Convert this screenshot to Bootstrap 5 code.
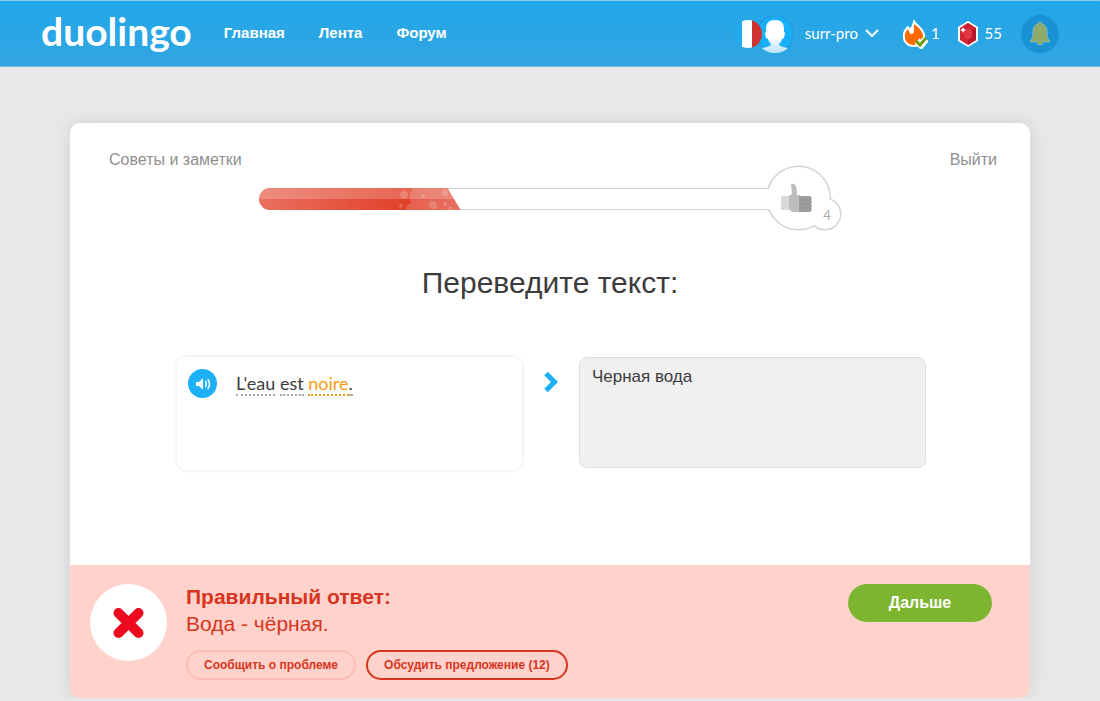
<!DOCTYPE html>
<html lang="ru">
<head>
<meta charset="utf-8">
<meta name="viewport" content="width=device-width, initial-scale=1">
<title>Duolingo</title>
<link href="https://cdn.jsdelivr.net/npm/bootstrap@5.3.0/dist/css/bootstrap.min.css" rel="stylesheet">
<style>
  body { font-family: "Liberation Sans", Arial, sans-serif; font-size: 16px; background: #e8e8e8; color: #3c3c3c; }
  a { text-decoration: none; }
  .latin { font-family: Lato, "Open Sans", sans-serif; }
  .topbar { height: 67px; background: linear-gradient(#21a7ea, #32a5e0); border-top: 1px solid #8acbea; border-bottom: 1px solid #6fbbe2; }
  .topbar-inner { max-width: 1018px; }
  .topbar a, .topbar button { color: #fff; }
  .wordmark { font: 700 39px/44px Lato, sans-serif; margin-right: 32px; padding-bottom: 6px; }
  .main-links { gap: 34px; font-size: 15px; font-weight: 700; }
  .user-menu { font-size: 15px; gap: 7px; margin-right: 23px; }
  .avatar-pair { margin-right: 3px; }
  .counter { font-size: 15px; gap: 3px; }
  .counter-gems { gap: 6px; margin-left: 17px; }
  .bell { width: 38px; height: 38px; background: #1a91d2; margin-left: 19px; }
  .lesson { max-width: 960px; margin-top: 56px; border-radius: 10px; background: #fff; box-shadow: 0 0 18px rgba(0,0,0,.1); overflow: hidden; }
  .lesson-links { padding: 26px 33px 0 39px; line-height: 22px; }
  .lesson-links a { color: #8f8f8f; }
  .meter { max-width: 583px; height: 66px; margin-top: -6px; }
  .meter-track { height: 22px; margin-top: 2px; border: solid #d0d0d0; border-width: 1px 0; border-radius: 11px 0 0 11px; }
  .meter-fill { height: 22px; margin: -1px 0; border-radius: 11px 0 0 11px; clip-path: polygon(0 0, calc(100% - 13px) 0, 100% 100%, 0 100%);
    background: linear-gradient(rgba(255,255,255,.2) 50%, transparent 50%), linear-gradient(90deg, #ea705f, #e03f28 75%, #e2503c); }
  .prompt { font-size: 30px; line-height: 36px; margin: 34px 0 55px; }
  .exercise { padding: 0 104px 94px 106px; }
  .source { min-height: 115px; border: 1px solid #f3f3f3; border-radius: 10px; box-shadow: 0 0 3px rgba(0,0,0,.08); padding: 12px 11px; gap: 19px; }
  .speaker { width: 29px; height: 29px; background: #1cb0f6; }
  .sentence { font-size: 18px; line-height: 22px; padding-top: 3px; }
  .word { border-bottom: 2px dotted #aaa; }
  .word-new { color: #f79a0e; border-color: #f79a0e; }
  .arrow { width: 56px; padding-top: 15px; }
  .answer { height: 111px; margin-top: 1px; background: #f0f0f0; border: 1px solid #dedede; border-radius: 8px; padding: 8px 12px; color: #3c3c3c; font-size: 17px; line-height: 22px; resize: none; }
  .answer:focus { background: #f0f0f0; }
  .verdict { background: #ffd3cc; color: #d7351d; padding: 19px 38px 18px 20px; min-height: 133px; }
  .cross { width: 77px; height: 77px; margin-right: 19px; }
  .verdict-title { font-size: 21px; line-height: 26px; }
  .verdict-text { font-size: 21px; line-height: 28px; margin-bottom: 12px; }
  .verdict-actions { gap: 10px; }
  .pill { height: 30px; font-size: 12px; font-weight: 700; line-height: 16px; border: 2px solid #fbbdb4; border-radius: 15px; padding: 0 16px; color: #d7351d; }
  .pill-strong { border-color: #d7351d; }
  .next { width: 144px; height: 38px; border-radius: 19px; background: #7eb530; color: #fff; font-weight: 700; font-size: 16px; }
</style>
</head>
<body>
<header class="topbar">
  <div class="topbar-inner container-fluid px-0 h-100 d-flex align-items-center">
    <a class="wordmark" href="#">duolingo</a>
    <nav class="main-links d-flex" aria-label="Разделы">
      <a href="#">Главная</a><a href="#">Лента</a><a href="#">Форум</a>
    </nav>
    <button class="user-menu latin btn p-0 border-0 d-flex align-items-center ms-auto" type="button">
      <svg class="avatar-pair" width="61" height="40" viewBox="0 0 61 40" aria-hidden="true">
        <defs>
          <clipPath id="flagClip"><circle cx="14" cy="20" r="14"/></clipPath>
          <linearGradient id="face" x1="0" y1="0" x2="0" y2="1"><stop offset=".5" stop-color="#fff"/><stop offset="1" stop-color="#b9e2f8"/></linearGradient>
        </defs>
        <circle cx="41" cy="20" r="19" fill="#22a0e4"/><circle cx="41" cy="20" r="17" fill="#17b0f8"/>
        <g clip-path="url(#flagClip)"><path fill="#22a9ef" d="M0 6h9v28H0z"/><path fill="#fff" d="M8 6h10v28H8z"/><path fill="#d0322f" d="M18 6h12v28H18z"/></g>
        <path fill="url(#face)" d="M41 6c6 0 9 3 9 9v3l1 1-1 5-2 1c-1 3-2 4-3 5 0 3 6 3 9 4-4 4-8 5-13 5s-9-1-13-5c3-1 9-1 9-4-1-1-2-2-3-5l-2-1-1-5 1-1v-3c0-6 3-9 9-9z"/>
      </svg>
      surr-pro
      <svg width="14" height="9" viewBox="0 0 14 9" fill="none" stroke="#fff" stroke-width="2" aria-hidden="true"><path d="M1 1l6 6 6-6"/></svg>
    </button>
    <a class="counter latin d-flex align-items-center" href="#">
      <svg width="26" height="30" viewBox="0 0 26 30" aria-hidden="true">
        <path d="M12 2c1 4 9 7 10 14 1 7-4 11-10 11S1 23 2 16c0-3 2-6 4-8l1 3c3-2 5-5 5-9z" fill="#ff6a00" stroke="#fff" stroke-width="2" stroke-linejoin="round"/>
        <path d="M7 10q3 1 5-3v5c0 4-5 4-5 0z" fill="#fff"/>
        <path d="M15 22l4 4 5-6" fill="none" stroke="#fff" stroke-width="7"/><path d="M14 22l4 4 6-7" fill="none" stroke="#6f9d13" stroke-width="3"/>
      </svg>1</a>
    <a class="counter counter-gems latin d-flex align-items-center" href="#">
      <svg width="22" height="28" viewBox="0 0 22 28" aria-hidden="true">
        <path d="M11 1l10 6v14l-10 6-10-6V7z" fill="#fff"/><path d="M11 3l8 5v12l-8 5-8-5V8z" fill="#d32435"/>
        <path d="M11 3l8 5-4 2-4-2-4 2-4-2z" fill="#c92233"/><path d="M11 8l4 2v7l-4 3-4-3v-7z" fill="#df3742"/><path d="M15 10l4-2v12l-8 5v-5l4-3z" fill="#b9182c"/>
        <path d="M6 7l1 2 2 1-2 1-1 2-1-2-2-1 2-1z" fill="#fff"/>
      </svg>55</a>
    <button class="bell btn p-0 border-0 rounded-circle d-flex align-items-center justify-content-center" type="button" aria-label="Уведомления">
      <svg width="22" height="26" viewBox="0 0 22 26" aria-hidden="true"><path d="M11 1c2 0 2 1 2 2 4 1 5 4 5 8 0 5 1 7 3 9v1h-7c0 2-1 3-3 3s-3-1-3-3H1v-1c2-2 3-4 3-9 0-4 1-7 5-8 0-1 0-2 2-2z" fill="#8fab6a" stroke="#6fb6d8"/></svg>
    </button>
  </div>
</header>

<main class="lesson container-fluid p-0">
  <div class="lesson-links d-flex justify-content-between"><a href="#">Советы и заметки</a><a href="#">Выйти</a></div>

  <div class="meter d-flex align-items-center mx-auto">
    <div class="meter-track flex-fill" role="progressbar" aria-label="Прогресс" aria-valuenow="40" aria-valuemin="0" aria-valuemax="100">
      <div class="meter-fill d-flex justify-content-end" style="width: 40%">
        <svg width="64" height="22" viewBox="0 0 64 22" fill="#fff" fill-opacity=".18" aria-hidden="true">
          <path d="M15 0h49v22H8c3-3 0-5 5-6 3-3-2-4 0-8 0-3 3-4 2-8z"/><circle cx="7" cy="7" r="4"/><circle cx="4" cy="18" r="2"/><circle cx="26" cy="8" r="2"/><circle cx="36" cy="17" r="4"/><circle cx="48" cy="5" r="3"/><circle cx="48" cy="16" r="2"/><circle cx="53" cy="20" r="2"/>
        </svg>
      </div>
    </div>
    <svg width="78" height="66" viewBox="0 0 78 66" aria-hidden="true">
      <g fill="#fff" stroke="#d4d4d4" stroke-width="3"><path d="M0 23.500h8M0 44.500h8" stroke-width="1" stroke="#d0d0d0"/><circle cx="34.5" cy="33" r="31"/><circle cx="61" cy="49" r="15"/></g>
      <g fill="#fff"><circle cx="34.5" cy="33" r="31"/><circle cx="61" cy="49" r="15"/><path d="M0 24h12v20H0z"/></g>
      <path d="M17 31h9v14h-9z" fill="#dadada"/>
      <path d="M27 19c5-1 6 4 6 11h3v17h-8l-3-3V31l3-2z" fill="#bdbdbd"/>
      <path d="M36 31h10l2 2-1 2 1 2-1 2 1 2-1 2 1 2-2 2H35V31z" fill="#9e9e9e"/><path d="M37 35h10M37 39h10M37 43h10" stroke="#8f8f8f"/>
      <text x="63" y="55" text-anchor="middle" font-family="Lato, sans-serif" font-size="13" fill="#aaa">4</text>
    </svg>
  </div>

  <h1 class="prompt text-center fw-normal">Переведите текст:</h1>

  <div class="exercise d-flex align-items-start">
    <div class="source flex-fill w-50 d-flex align-items-start">
      <button class="speaker btn p-0 border-0 rounded-circle d-flex align-items-center justify-content-center" type="button" aria-label="Прослушать">
        <svg width="16" height="14" viewBox="0 0 16 14" fill="none" stroke="#fff" stroke-width="1.5" stroke-linecap="round" aria-hidden="true"><path d="M1 5h3l4-4v12L4 9H1z" fill="#fff" stroke="none"/><path d="M10.500 4.500q1.500 2.500 0 5M13 2.500q3 4.500 0 9"/></svg>
      </button>
      <p class="sentence latin mb-0" lang="fr"><span class="word">L'eau</span> <span class="word">est</span> <span class="word word-new">noire</span><span class="word">.</span></p>
    </div>
    <div class="arrow flex-shrink-0 text-center lh-1">
      <svg width="14" height="22" viewBox="0 0 14 22" fill="none" stroke="#1cb0f6" stroke-width="5" aria-hidden="true"><path d="M2 2.500l8.500 8.500L2 19.500"/></svg>
    </div>
    <textarea class="answer form-control flex-fill w-50" aria-label="Ваш перевод">Черная вода</textarea>
  </div>

  <section class="verdict d-flex align-items-start">
    <svg class="cross flex-shrink-0" viewBox="0 0 77 77" aria-hidden="true"><circle cx="38.500" cy="38.500" r="38.500" fill="#fff"/><path d="M28.500 29l20 20M48.500 29l-20 20" stroke="#ee0a1e" stroke-width="10" stroke-linecap="round"/></svg>
    <div class="flex-fill">
      <h2 class="verdict-title fw-bold mb-0">Правильный ответ:</h2>
      <p class="verdict-text">Вода - чёрная.</p>
      <div class="verdict-actions d-flex flex-wrap">
        <button class="pill btn" type="button">Сообщить о проблеме</button>
        <button class="pill pill-strong btn" type="button">Обсудить предложение (12)</button>
      </div>
    </div>
    <button class="next btn p-0 border-0 flex-shrink-0" type="button">Дальше</button>
  </section>
</main>
<script src="https://cdn.jsdelivr.net/npm/bootstrap@5.3.0/dist/js/bootstrap.bundle.min.js"></script>
</body>
</html>
